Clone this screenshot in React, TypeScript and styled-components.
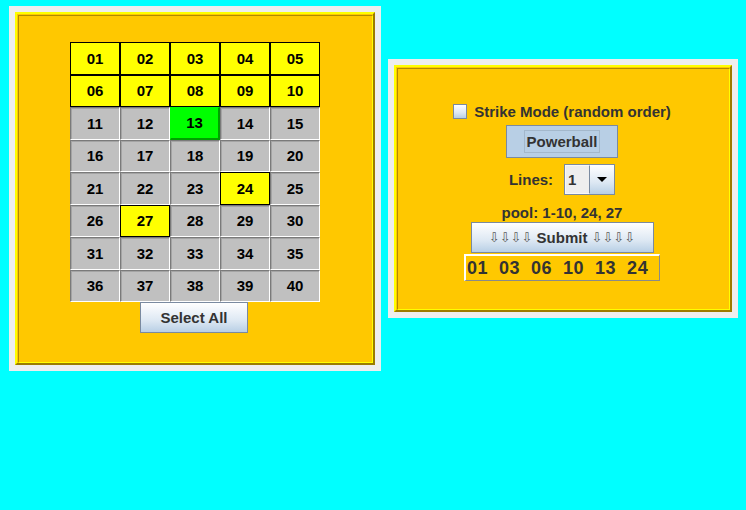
import React from "react";
import styled, { createGlobalStyle, css } from "styled-components";

const GlobalStyle = createGlobalStyle`
  html, body {
    margin: 0;
    padding: 0;
    background: #00ffff;
  }
  body {
    font-family: "Liberation Sans", Arial, sans-serif;
  }
`;

const metalGradient = css`
  background: linear-gradient(to bottom, #ffffff 0%, #f1f5fa 25%, #dde8f3 60%, #b8cfe5 100%);
  border: 1px solid #7a8aa0;
`;

const Desktop = styled.div`
  display: flex;
  align-items: center;
  gap: 7px;
  padding: 6px 0 0 9px;
  width: 746px;
  box-sizing: border-box;
`;

const Frame = styled.div`
  background: #eeeeee;
  padding: 6px;
`;

const Bevel = styled.div<{ $w: number; $h: number }>`
  box-sizing: border-box;
  width: ${({ $w }) => $w}px;
  height: ${({ $h }) => $h}px;
  border: 2px solid;
  border-color: #ffff00 #9b7b00 #9b7b00 #ffff00;
  padding: 1px 0 0 1px;
  background: #ffc800;
`;

const BevelInner = styled.div<{ $top: number }>`
  box-sizing: border-box;
  height: 100%;
  border: 1px solid;
  border-color: #b08c00 #ffff00 #ffff00 #b08c00;
  display: flex;
  flex-direction: column;
  align-items: center;
  padding-top: ${({ $top }) => $top}px;
  padding-right: 3px;
`;

const Board = styled.div`
  display: grid;
  grid-template-columns: repeat(5, 50px);
  grid-template-rows: repeat(8, 32.5px);
  margin-left: 2px;
`;

type CellKind = "pick" | "hit" | "idle";

const Cell = styled.div<{ $kind: CellKind }>`
  box-sizing: border-box;
  display: flex;
  align-items: center;
  justify-content: center;
  font-size: 15px;
  font-weight: bold;
  color: #000;
  ${({ $kind }) =>
    $kind === "pick"
      ? css`
          background: #ffff00;
          border: 1px solid #000;
        `
      : $kind === "hit"
      ? css`
          background: #00ff00;
          border-style: solid;
          border-width: 1px 2px 2px 1px;
          border-color: #00ff00 #00a000 #00a000 #00ff00;
        `
      : css`
          background: #c0c0c0;
          border: 1px solid;
          border-color: #7a7a7a #ffffff #ffffff #7a7a7a;
          box-shadow: inset 1px 1px 0 #a4a4a4;
        `}
`;

const Button = styled.div<{ $w: number; $h: number }>`
  ${metalGradient};
  box-sizing: border-box;
  width: ${({ $w }) => $w}px;
  height: ${({ $h }) => $h}px;
  display: flex;
  align-items: center;
  justify-content: center;
  font-size: 15px;
  font-weight: bold;
  color: #333333;
  white-space: pre;
`;

const SubmitButton = styled(Button)`
  margin-top: 1px;
`;

const Arrows = styled.span`
  font-family: "DejaVu Sans", sans-serif;
  font-weight: normal;
  font-size: 13px;
  color: #5a5a5a;
`;

const CheckRow = styled.label`
  display: flex;
  align-items: center;
  gap: 7px;
  height: 18px;
  font-size: 15px;
  font-weight: bold;
  color: #333333;
`;

const CheckBox = styled.span`
  ${metalGradient};
  box-sizing: border-box;
  width: 14px;
  height: 15px;
`;

const Toggle = styled.div`
  box-sizing: border-box;
  width: 112px;
  height: 33px;
  margin-top: 5px;
  background: #b8cfe5;
  border: 1px solid #7a8aa0;
  display: flex;
  align-items: center;
  justify-content: center;
`;

const FocusRing = styled.span`
  box-sizing: border-box;
  height: 23px;
  padding: 0 2px;
  border: 1px solid #a3b8cc;
  display: flex;
  align-items: center;
  font-size: 15px;
  font-weight: bold;
  color: #333333;
`;

const LinesRow = styled.div`
  display: flex;
  align-items: center;
  gap: 11px;
  margin-top: 6px;
  font-size: 15px;
  font-weight: bold;
  color: #333333;
`;

const Combo = styled.div`
  box-sizing: border-box;
  width: 51px;
  height: 31px;
  border: 1px solid #7a8aa0;
  display: flex;
`;

const ComboField = styled.div`
  box-sizing: border-box;
  width: 25px;
  background: #eeeeee;
  border: 1px solid #f8f8f8;
  border-right: 1px solid #7a8aa0;
  display: flex;
  align-items: center;
  padding-left: 2px;
  font-size: 15px;
  color: #333333;
`;

const ComboArrow = styled.div`
  flex: 1;
  background: linear-gradient(to bottom, #ffffff 0%, #f1f5fa 25%, #dde8f3 60%, #b8cfe5 100%);
  display: flex;
  align-items: center;
  justify-content: center;
  &::after {
    content: "";
    border-left: 5px solid transparent;
    border-right: 5px solid transparent;
    border-top: 5px solid #000;
  }
`;

const Pool = styled.div`
  margin-top: 9px;
  line-height: 17px;
  font-size: 15px;
  font-weight: bold;
  color: #333333;
`;

const Result = styled.div`
  box-sizing: border-box;
  width: 196px;
  height: 27px;
  margin-top: 1px;
  border-style: solid;
  border-width: 2px 1px 1px 2px;
  border-color: #ffffff #8a8a8a #8a8a8a #ffffff;
  display: flex;
  align-items: center;
  padding-left: 1px;
  font-size: 18px;
  font-weight: bold;
  color: #333333;
  white-space: pre;
  letter-spacing: 0.5px;
`;

const picks = [1, 2, 3, 4, 5, 6, 7, 8, 9, 10, 24, 27];
const hits = [13];

const kindOf = (n: number): CellKind =>
  hits.includes(n) ? "hit" : picks.includes(n) ? "pick" : "idle";

export default function App() {
  const numbers = Array.from({ length: 40 }, (_, i) => i + 1);
  const drawn = ["01", "03", "06", "10", "13", "24"];

  return (
    <>
      <GlobalStyle />
      <Desktop>
        <Frame>
          <Bevel $w={360} $h={353}>
            <BevelInner $top={26}>
              <Board>
                {numbers.map(n => (
                  <Cell key={n} $kind={kindOf(n)}>
                    {String(n).padStart(2, "0")}
                  </Cell>
                ))}
              </Board>
              <Button $w={108} $h={31}>Select All</Button>
            </BevelInner>
          </Bevel>
        </Frame>
        <Frame>
          <Bevel $w={338} $h={247}>
            <BevelInner $top={33}>
              <CheckRow>
                <CheckBox />
                Strike Mode (random order)
              </CheckRow>
              <Toggle>
                <FocusRing>Powerball</FocusRing>
              </Toggle>
              <LinesRow>
                Lines:
                <Combo>
                  <ComboField>1</ComboField>
                  <ComboArrow />
                </Combo>
              </LinesRow>
              <Pool>pool: 1-10, 24, 27</Pool>
              <SubmitButton $w={183} $h={31}>
                <Arrows>⇩⇩⇩⇩</Arrows> Submit <Arrows>⇩⇩⇩⇩</Arrows>
              </SubmitButton>
              <Result>{drawn.join("  ")}</Result>
            </BevelInner>
          </Bevel>
        </Frame>
      </Desktop>
    </>
  );
}
